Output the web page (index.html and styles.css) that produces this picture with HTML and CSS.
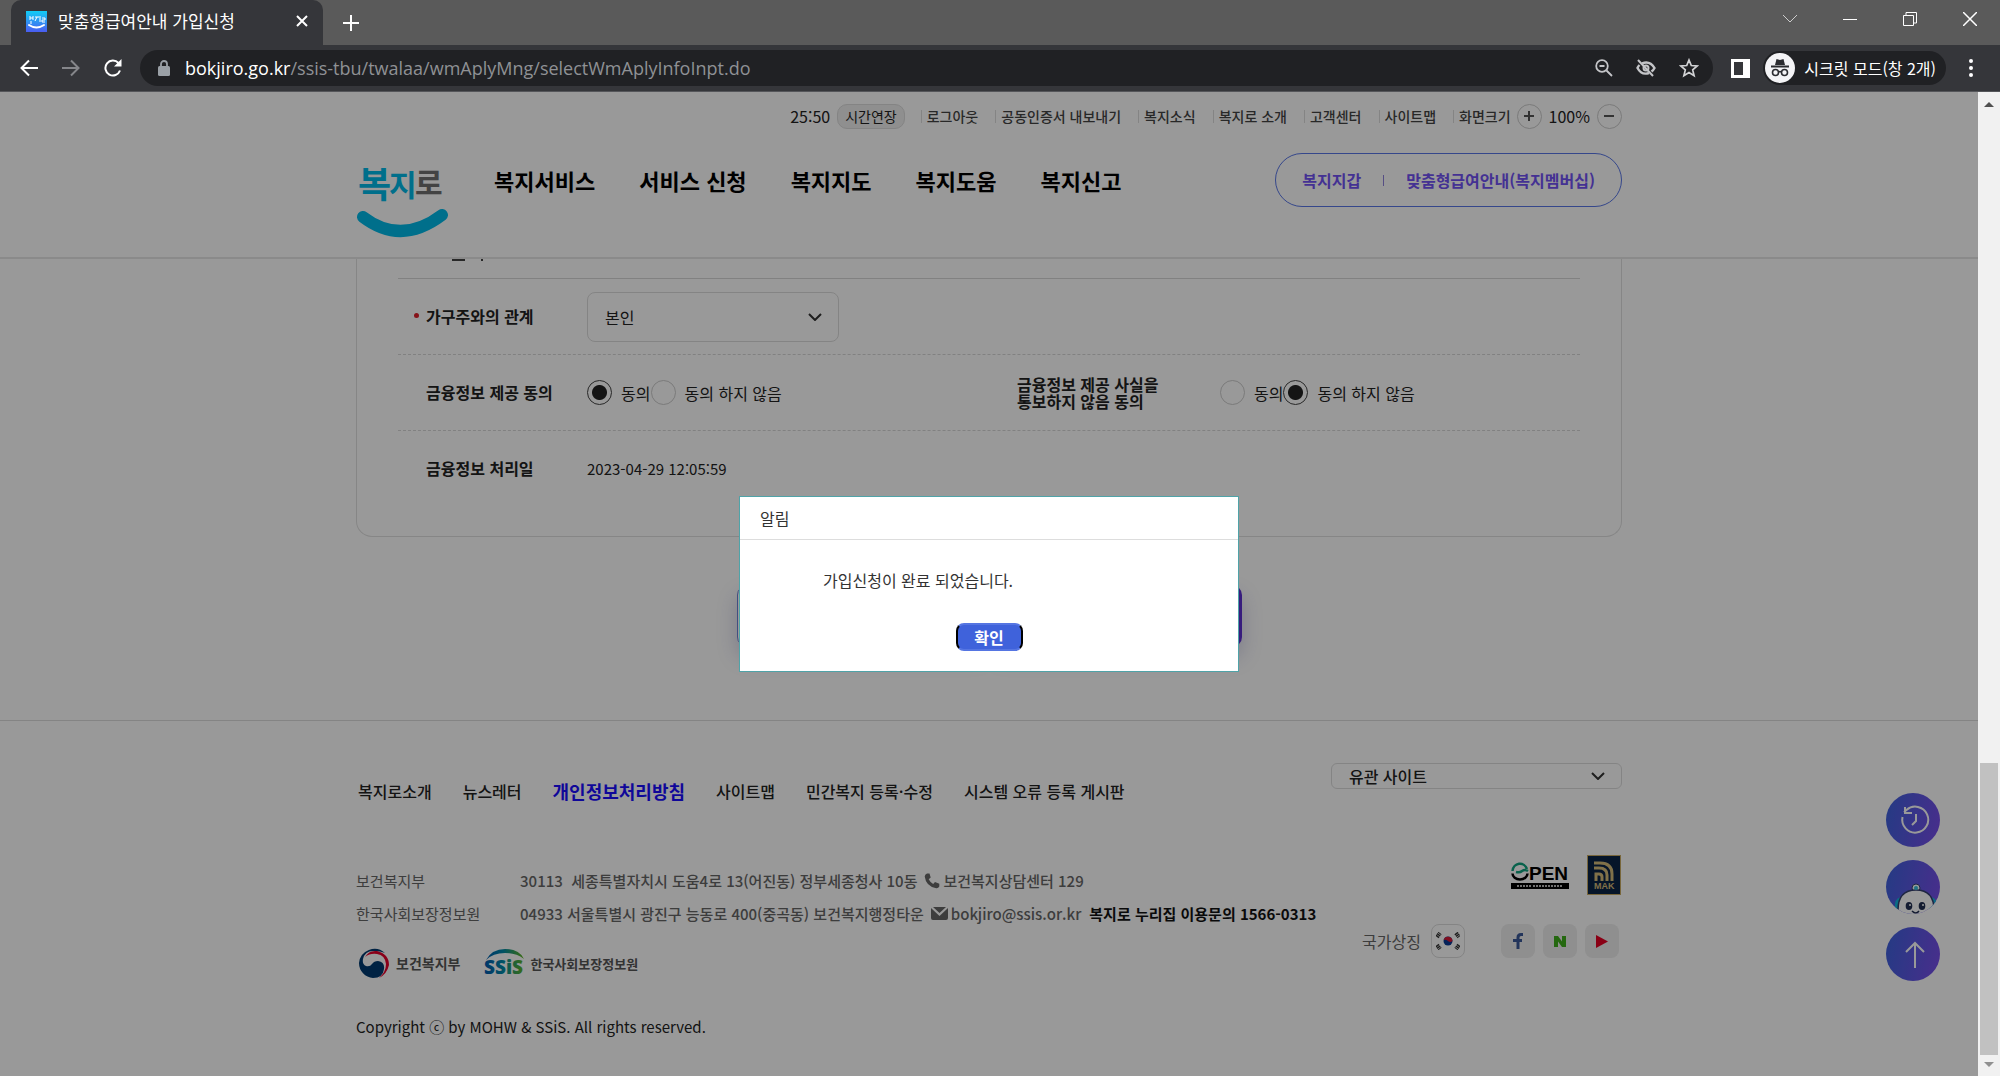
FILE: index.html
```
<!DOCTYPE html>
<html lang="ko">

<head>
	<meta charset="utf-8">
	<title>맞춤형급여안내 가입신청</title>
	<link rel="stylesheet" href="styles.css">
</head>

<body>
	<!-- browser window -->
	<div class="tab-bar">
		<div class="tab">
			<svg class="favicon" viewBox="0 0 21 21">
				<defs>
					<linearGradient id="fav" x1="0" y1="0" x2="0" y2="1">
						<stop offset="0" stop-color="#12cdf5" />
						<stop offset="1" stop-color="#4a5cf0" />
					</linearGradient>
				</defs>
				<rect width="21" height="21" fill="url(#fav)" />
				<path d="M4 5v4M7 5v4M4 7h3M5 10v3M9 6h4M11 6l-2 4M14 5v6M16 7h3v2h-3v2h3" stroke="#fff" stroke-width="1" fill="none" />
				<path d="M3 14q7.5 5 15 0" stroke="#fff" stroke-width="2" fill="none" stroke-linecap="round" />
			</svg>
			<span class="tab-title">맞춤형급여안내 가입신청</span>
			<button class="icon-btn" aria-label="탭 닫기">
				<svg width="12" height="12" viewBox="0 0 12 12" stroke="#fff" stroke-width="2"><path d="M1 1l10 10M11 1L1 11" /></svg>
			</button>
		</div>
		<button class="icon-btn new-tab" aria-label="새 탭">
			<svg width="16" height="16" viewBox="0 0 16 16" stroke="#fff" stroke-width="2"><path d="M8 0v16M0 8h16" /></svg>
		</button>
		<div class="window-buttons">
			<button class="icon-btn" aria-label="탭 검색"><svg width="14" height="14" viewBox="0 0 14 14" fill="none" stroke="#ccc"><path d="M0 3l7 7 7-7" /></svg></button>
			<button class="icon-btn" aria-label="최소화"><svg width="14" height="14" viewBox="0 0 14 14" fill="none" stroke="#fff"><path d="M0 7.5h14" /></svg></button>
			<button class="icon-btn" aria-label="이전 크기로"><svg width="14" height="14" viewBox="0 0 14 14" fill="none" stroke="#fff"><path d="M.5 3.5h10v10h-10zM3 3V.5h10.500V11H11" /></svg></button>
			<button class="icon-btn" aria-label="닫기"><svg width="14" height="14" viewBox="0 0 14 14" fill="none" stroke="#fff" stroke-width="1.5"><path d="M0 0l14 14M14 0L0 14" /></svg></button>
		</div>
	</div>

	<div class="toolbar">
		<div class="nav-buttons">
			<button class="icon-btn" aria-label="뒤로"><svg width="18" height="18" viewBox="0 0 18 18" fill="none" stroke="#fff" stroke-width="2"><path d="M18 9H2M9 1.5L1.5 9 9 16.5" /></svg></button>
			<button class="icon-btn" aria-label="앞으로"><svg width="18" height="18" viewBox="0 0 18 18" fill="none" stroke="#85868a" stroke-width="2"><path d="M0 9h16M9 1.5L16.5 9 9 16.5" /></svg></button>
			<button class="icon-btn" aria-label="새로고침"><svg width="18" height="18" viewBox="0 0 18 18"><path d="M16 11.5A7.5 7.5 0 1 1 14.5 4" fill="none" stroke="#fff" stroke-width="2" /><path d="M17.5 0v7.5H10z" fill="#fff" /></svg></button>
		</div>
		<div class="omnibox">
			<svg width="12" height="16" viewBox="0 0 12 16"><rect y="6" width="12" height="10" rx="1.5" fill="#9aa0a6" /><path d="M3 7V4a3 3 0 0 1 6 0v3" fill="none" stroke="#9aa0a6" stroke-width="1.8" /></svg>
			<div class="url"><b>bokjiro.go.kr</b>/ssis-tbu/twalaa/wmAplyMng/selectWmAplyInfoInpt.do</div>
			<button class="icon-btn" aria-label="확대/축소"><svg width="18" height="18" viewBox="0 0 18 18" fill="none" stroke="#c4c5c8" stroke-width="1.8"><circle cx="7" cy="7" r="5.8" /><path d="M11.5 11.5l5.5 5.5M4.5 7h5" /></svg></button>
			<button class="icon-btn" aria-label="서드 파티 쿠키 차단됨"><svg width="20" height="18" viewBox="0 0 20 18" fill="none" stroke="#c4c5c8" stroke-width="2"><path d="M6 4.3q8-3 12.5 4.7-1 2-3 3.5M3.5 6Q2 7.5 1.5 9q4 7.5 11.5 5" stroke-width="2.4" /><circle cx="10" cy="9" r="2.5" /><path d="M2 1l15 16" /></svg></button>
			<button class="icon-btn" aria-label="북마크"><svg width="20" height="20" viewBox="0 0 20 20" fill="none" stroke="#d2d3d5" stroke-width="1.7"><path d="M10 2l2.3 5.5 5.9.5-4.5 3.9 1.4 5.8L10 14.600l-5.1 3.1 1.4-5.8L1.8 8l5.9-.5z" /></svg></button>
		</div>
		<button class="icon-btn panel-btn" aria-label="측면 패널"><svg width="19" height="19" viewBox="0 0 19 19"><path fill="#fff" fill-rule="evenodd" d="M0 0h19v19H0zM3 3v13h9V3z" /></svg></button>
		<button class="profile">
			<svg width="30" height="30" viewBox="0 0 30 30">
				<circle cx="15" cy="15" r="15" fill="#f4f4f6" />
				<path d="M10 12l1.5-6 3.5 1 3.5-1 1.5 6zM6 12.5h18v2H6z" fill="#2b2c30" />
				<g fill="none" stroke="#2b2c30" stroke-width="1.6"><circle cx="10.5" cy="19.5" r="3" /><circle cx="19.5" cy="19.5" r="3" /><path d="M13.5 19q1.5-1 3 0" /></g>
			</svg>
			<span>시크릿 모드(창 2개)</span>
		</button>
		<button class="icon-btn" aria-label="메뉴"><svg width="4" height="18" viewBox="0 0 4 18" fill="#fff"><circle cx="2" cy="2" r="2" /><circle cx="2" cy="9" r="2" /><circle cx="2" cy="16" r="2" /></svg></button>
	</div>

	<div class="view">
		<div class="page">
			<header class="site-header">
				<div class="inner">
					<div class="util">
						<span class="timer">25:50</span>
						<button class="extend">시간연장</button>
						<ul class="util-menu">
							<li><a href="#">로그아웃</a></li>
							<li><a href="#">공동인증서 내보내기</a></li>
							<li><a href="#">복지소식</a></li>
							<li><a href="#">복지로 소개</a></li>
							<li><a href="#">고객센터</a></li>
							<li><a href="#">사이트맵</a></li>
							<li>화면크기</li>
						</ul>
						<button class="zoom-btn" aria-label="확대"><svg width="10" height="10" viewBox="0 0 10 10" stroke="#555" stroke-width="2"><path d="M5 0v10M0 5h10" /></svg></button>
						<span class="percent">100%</span>
						<button class="zoom-btn" aria-label="축소"><svg width="10" height="10" viewBox="0 0 10 10" stroke="#555" stroke-width="2"><path d="M0 5h10" /></svg></button>
					</div>
					<div class="gnb">
						<a href="#" aria-label="복지로">
							<svg class="logo" viewBox="0 0 93 86">
								<text x="2" y="45" font-size="36" fill="#00b9e8">복</text>
								<text x="33" y="43" font-size="30" fill="#00b9e8">지</text>
								<text x="59" y="41" font-size="30" fill="#707070">로</text>
								<path d="M7 64Q45 93 86 62" fill="none" stroke="#00b9e8" stroke-width="12" stroke-linecap="round" />
							</svg>
						</a>
						<nav class="menu">
							<a href="#">복지서비스</a>
							<a href="#">서비스 신청</a>
							<a href="#">복지지도</a>
							<a href="#">복지도움</a>
							<a href="#">복지신고</a>
						</nav>
						<div class="pill">
							<a href="#">복지지갑</a>
							<a href="#">맞춤형급여안내(복지멤버십)</a>
						</div>
					</div>
				</div>
			</header>

			<main class="inner">
				<form class="card">
					<div class="cut-row"><i></i><i></i></div>
					<div class="row">
						<div class="cell">
							<label class="label required" for="relation">가구주와의 관계</label>
							<select id="relation" class="select relation">
								<option>본인</option>
							</select>
						</div>
					</div>
					<div class="row">
						<div class="cell" role="group" aria-labelledby="agree-label">
							<span class="label" id="agree-label">금융정보 제공 동의</span>
							<label class="radio"><input type="radio" name="agree" checked>동의</label>
							<label class="radio"><input type="radio" name="agree">동의 하지 않음</label>
						</div>
						<div class="cell" role="group" aria-labelledby="notice-label">
							<span class="label wide" id="notice-label">금융정보 제공 사실을<br>통보하지 않음 동의</span>
							<label class="radio"><input type="radio" name="notice">동의</label>
							<label class="radio"><input type="radio" name="notice" checked>동의 하지 않음</label>
						</div>
					</div>
					<div class="row">
						<div class="cell">
							<span class="label">금융정보 처리일</span>
							<span class="date">2023-04-29 12:05:59</span>
						</div>
					</div>
				</form>
				<div class="form-buttons">
					<button class="btn-line" aria-label="이전"></button>
					<button class="btn-fill" aria-label="신청"></button>
				</div>
			</main>

			<footer class="site-footer">
				<div class="inner footer-cols">
					<div class="footer-left">
						<nav class="footer-menu">
							<a href="#">복지로소개</a>
							<a href="#">뉴스레터</a>
							<a href="#" class="privacy">개인정보처리방침</a>
							<a href="#">사이트맵</a>
							<a href="#">민간복지 등록·수정</a>
							<a href="#">시스템 오류 등록 게시판</a>
						</nav>
						<dl class="address">
							<dt>보건복지부</dt>
							<dd>
								<span>30113&nbsp; 세종특별자치시 도움4로 13(어진동) 정부세종청사 10동</span>
								<svg width="16" height="16" viewBox="0 0 16 16"><path d="M3 .5l2.5 0 1.2 4-2 1.7q1.5 3.2 4.5 4.7L11 9l4.3 1.7v2.8q-1 2-3 1.8Q2 13.5.7 3.5.8 1.5 3 .5z" fill="#666" /></svg>
								<span>보건복지상담센터 129</span>
							</dd>
							<dt>한국사회보장정보원</dt>
							<dd>
								<span>04933 서울특별시 광진구 능동로 400(중곡동) 보건복지행정타운</span>
								<svg width="17" height="13" viewBox="0 0 17 13"><path d="M2 0h13L8.5 6zM0 1l8.5 8L17 1v10q0 2-2 2H2q-2 0-2-2z" fill="#666" /></svg>
								<a href="#">bokjiro@ssis.or.kr</a>
								<strong>복지로 누리집 이용문의 1566-0313</strong>
							</dd>
						</dl>
						<div class="orgs">
							<a href="#" class="mohw">
								<svg width="32" height="32" viewBox="0 0 32 32">
									<path d="M27 6A15.5 15.5 0 0 0 1 16 15 15 0 0 0 15 31q10 0 11-9 1-7-6-8-4 0-6 3-2 3-6 2-4-2-3-7 2-8 10-8 8 0 12 2z" fill="#003a70" />
									<path d="M7 10Q11 3 19 4 31 7 31 18 29 27 21 31 28 25 28 17 27 8 19 7 12 6 7 10z" fill="#e5002b" />
								</svg>
								<span>보건복지부</span>
							</a>
							<a href="#" class="ssis">
								<svg width="42" height="28" viewBox="0 0 42 28">
									<defs>
										<linearGradient id="ss" gradientUnits="userSpaceOnUse" x1="0" y1="0" x2="42" y2="0">
											<stop offset="0" stop-color="#0058b0" />
											<stop offset=".45" stop-color="#0088a8" />
											<stop offset="1" stop-color="#6dbb10" />
										</linearGradient>
									</defs>
									<path d="M2 11Q8 0 21 0q14 0 19 10Q32 4 21 4 9 4 2 11z" fill="url(#ss)" />
									<text x="0" y="25" fill="url(#ss)">SSiS</text>
								</svg>
								<span>한국사회보장정보원</span>
							</a>
						</div>
						<p class="copyright">Copyright ⓒ by MOHW &amp; SSiS. All rights reserved.</p>
					</div>
					<div class="footer-right">
						<select class="select related" aria-label="유관 사이트">
							<option>유관 사이트</option>
						</select>
						<div class="marks">
							<svg width="58" height="27" viewBox="0 0 58 27">
								<path d="M1.500 9A7.500 8 0 0 1 16 7M5 10q4 1 6-1 3-2 6 0" fill="none" stroke="#10a37f" stroke-width="2.500" />
								<path d="M1.500 11.500a7.500 6 0 0 0 15 0" fill="none" stroke="#000" stroke-width="2.500" />
								<text x="18" y="18" class="open-text">PEN</text>
								<rect y="21" width="58" height="6" fill="#000" />
								<path d="M6 24h14M22 24h30" stroke="#bbb" stroke-width="2" stroke-dasharray="2 1" />
							</svg>
							<svg width="34" height="40" viewBox="0 0 34 40">
								<rect x=".5" y=".5" width="33" height="39" fill="#0b2345" stroke="#c9ab63" />
								<path d="M7 8h6q12 0 12 11v7M7 13h5q8 0 8 7v6M9 26v-7h3q3 0 3 3v4" fill="none" stroke="#d6bd7b" stroke-width="3" />
								<text x="7" y="34" class="mak-text">MAK</text>
							</svg>
						</div>
						<div class="sns">
							<span>국가상징</span>
							<a href="#" class="flag" aria-label="태극기">
								<svg width="24" height="18" viewBox="0 0 24 18">
									<circle cx="12" cy="9" r="4.5" fill="#0b3a94" />
									<path d="M7.700 8A4.500 4.500 0 0 1 16.500 9Q14 11 12 9T7.700 8z" fill="#d91a36" />
									<path d="M1 5l3-4M20 1l3 4M1 13l3 4M23 13l-3 4" stroke="#333" stroke-width="4" stroke-dasharray="1.5 .5" />
								</svg>
							</a>
							<a href="#" aria-label="페이스북"><svg width="16" height="18" viewBox="0 0 16 18" fill="none" stroke="#3b5998" stroke-width="3"><path d="M13 2.5h-2q-3 0-3 3V17M3 8.5h9" /></svg></a>
							<a href="#" aria-label="네이버 블로그"><svg width="12" height="11" viewBox="0 0 12 11"><path d="M0 0h4l4 5.500V0h4v11H8L4 5.500V11H0z" fill="#3fae1c" /></svg></a>
							<a href="#" aria-label="유튜브"><svg width="12" height="13" viewBox="0 0 12 13"><path d="M0 0l12 6.500L0 13z" fill="#e60023" /></svg></a>
						</div>
					</div>
				</div>
			</footer>

			<div class="quick">
				<button aria-label="최근 이용 서비스">
					<svg width="54" height="54" viewBox="0 0 54 54" fill="none" stroke="#fff" stroke-width="2"><path d="M16.500 24a13 13 0 1 0 4-7L18 19M19 14v6h7M30 21v7l-4 4" /></svg>
				</button>
				<button aria-label="챗봇">
					<svg width="54" height="54" viewBox="0 0 54 54">
						<path d="M15 37q-7 1-6 12h42q1-11-6-12z" fill="#12b4dc" />
						<circle cx="30" cy="28" r="4" fill="#fff" stroke="#34406e" />
						<path d="M12 50q0-20 18-20t18 20v8H12z" fill="#fff" stroke="#34406e" stroke-width="1.5" />
						<circle cx="30" cy="28" r="2" fill="#32bede" />
						<ellipse cx="23" cy="46" rx="3.3" ry="4" fill="#223052" />
						<ellipse cx="36" cy="46" rx="3.3" ry="4" fill="#223052" />
						<circle cx="24" cy="45" r="1" fill="#fff" />
						<circle cx="37" cy="45" r="1" fill="#fff" />
						<path d="M26 51q4 4 7 0" stroke="#223052" stroke-width="1.5" fill="none" />
					</svg>
				</button>
				<button aria-label="맨 위로">
					<svg width="54" height="54" viewBox="0 0 54 54" fill="none" stroke="#fff" stroke-width="2"><path d="M29 41V16M20 25l9-9 9 9" /></svg>
				</button>
			</div>

			<!-- alert -->
			<div class="dim">
				<div class="alert" role="alertdialog" aria-labelledby="alert-title">
					<div class="alert-title" id="alert-title">알림</div>
					<p>가입신청이 완료 되었습니다.</p>
					<button>확인</button>
				</div>
			</div>
		</div>
		<div class="scrollbar">
			<svg width="10" height="5" viewBox="0 0 10 5" fill="#505050"><path d="M0 5l5-5 5 5z" /></svg>
			<div class="track"><div class="thumb"></div></div>
			<svg width="10" height="5" viewBox="0 0 10 5" fill="#909090"><path d="M0 0l5 5 5-5z" /></svg>
		</div>
	</div>
</body>

</html>
```

FILE: styles.css
```
* {
	box-sizing: border-box;
}

body {
	margin: 0;
	height: 100vh;
	display: flex;
	flex-direction: column;
	overflow: hidden;
	font-family: "Noto Sans CJK KR", sans-serif;
	font-size: 16px;
	color: #222;
}

a {
	color: inherit;
	text-decoration: none;
}

button {
	font-family: inherit;
	padding: 0;
	border: 0;
	cursor: pointer;
}

svg {
	display: block;
	flex: none;
}

ul,
dl,
dd,
p {
	margin: 0;
	padding: 0;
	list-style: none;
}

.icon-btn {
	background: none;
	display: flex;
}

/* browser window */
.tab-bar {
	height: 45px;
	background: #5a5a5a;
	display: flex;
	align-items: center;
	padding: 0 23px 0 11px;
}

.tab {
	width: 312px;
	height: 45px;
	background: #35363a;
	border-radius: 10px 10px 0 0;
	display: flex;
	align-items: center;
	gap: 11px;
	padding: 0 15px 3px;
	color: #fff;
}

.favicon {
	width: 21px;
	height: 21px;
}

.tab-title {
	flex: 1;
	font-size: 17px;
	line-height: 24px;
	white-space: nowrap;
}

.new-tab {
	margin-left: 20px;
}

.window-buttons {
	margin: 0 0 7px auto;
	display: flex;
	gap: 46px;
}

.toolbar {
	height: 47px;
	background: #35363a;
	border-bottom: 1px solid #55565a;
	display: flex;
	align-items: center;
	padding: 0 27px 0 20px;
}

.nav-buttons {
	display: flex;
	gap: 24px;
	margin-right: 18px;
}

.omnibox {
	flex: 1;
	height: 36px;
	border-radius: 18px;
	background: #202124;
	display: flex;
	align-items: center;
	gap: 23px;
	padding: 0 14px 0 18px;
}

.url {
	flex: 1;
	margin-left: -8px;
	font-family: "Open Sans", "Noto Sans CJK KR", sans-serif;
	font-size: 18px;
	color: #8f9195;
}

.url b {
	font-weight: 400;
	color: #fff;
}

.panel-btn {
	margin: 0 13px 0 18px;
}

.profile {
	height: 34px;
	border-radius: 17px;
	background: #202124;
	color: #fff;
	font-size: 16px;
	display: flex;
	align-items: center;
	gap: 9px;
	padding: 0 10px 0 2px;
	margin-right: 23px;
}

.view {
	flex: 1;
	min-height: 0;
	display: flex;
}

.page {
	flex: 1;
	position: relative;
	overflow: hidden;
	background: #fff;
}

.scrollbar {
	width: 22px;
	background: #f1f1f1;
	display: flex;
	flex-direction: column;
	align-items: center;
	padding: 10px 0 9px;
}

.track {
	flex: 1;
	width: 18px;
	margin: 7px 0;
	display: flex;
	flex-direction: column;
	justify-content: flex-end;
}

.thumb {
	height: 31%;
	background: #c1c1c1;
}

.inner {
	width: 64%;
	margin: 0 auto;
}

/* header */
.site-header {
	padding-top: 11px;
	border-bottom: 2px solid #e6e6e6;
}

.util {
	height: 26px;
	display: flex;
	align-items: center;
	justify-content: flex-end;
	font-size: 14px;
}

.timer,
.percent {
	font-size: 16px;
}

.extend {
	height: 25px;
	margin: 0 16px 0 7px;
	padding: 0 7px;
	border: 1px solid #dcdcdc;
	border-radius: 10px;
	background: #eee;
	color: #222;
	font-size: 14px;
	line-height: 22px;
}

.util-menu {
	display: flex;
	gap: 17px;
	margin-right: 6px;
	color: #444;
	font-weight: 500;
}

.util-menu li {
	display: flex;
	align-items: center;
	line-height: 20px;
}

.util-menu li::before {
	content: "";
	width: 1px;
	height: 13px;
	margin-right: 5px;
	background: #ddd;
}

.zoom-btn {
	width: 25px;
	height: 25px;
	border: 1px solid #ccc;
	border-radius: 50%;
	background: none;
	display: flex;
	align-items: center;
	justify-content: center;
}

.percent {
	margin: 0 7px;
}

.gnb {
	display: flex;
	align-items: flex-start;
	padding: 24px 0 18px;
}

.logo {
	width: 93px;
	height: 86px;
	font-family: "Noto Sans CJK KR", sans-serif;
	font-weight: 700;
}

.menu {
	display: flex;
	gap: 44px;
	margin-left: 45px;
	font-size: 22px;
	font-weight: 700;
	line-height: 54px;
	color: #000;
}

.pill {
	margin-left: auto;
	height: 54px;
	display: flex;
	align-items: center;
	padding: 0 26px;
	border: 1px solid #5977e8;
	border-radius: 27px;
	color: #7253f5;
	font-weight: 700;
}

.pill a + a {
	display: flex;
	align-items: center;
}

.pill a + a::before {
	content: "";
	width: 1px;
	height: 11px;
	margin: 0 22px;
	background: #8f83dd;
}

/* form */
.card {
	padding: 0 41px 30px;
	border: 1px solid #e0e0e0;
	border-top: 0;
	border-radius: 0 0 16px 16px;
}

/* tail of the section title that is scrolled under the header */
.cut-row {
	height: 19px;
	display: flex;
	gap: 16px;
	padding-left: 54px;
}

.cut-row i {
	width: 13px;
	height: 2px;
	background: #444;
}

.cut-row i + i {
	width: 2px;
}

.row {
	height: 76px;
	display: flex;
	border-top: 1px dashed #d8d8d8;
}

.cut-row + .row {
	border-top: 1px solid #d8d8d8;
}

.cell {
	width: 50%;
	display: flex;
	align-items: center;
	padding-left: 28px;
}

.label {
	width: 161px;
	position: relative;
	font-weight: 700;
	line-height: 17px;
}

.label.wide {
	width: 203px;
}

.required::before {
	content: "";
	position: absolute;
	left: -12px;
	top: 5px;
	width: 5px;
	height: 5px;
	border-radius: 50%;
	background: #e0202b;
}

.select {
	appearance: none;
	border: 1px solid #ddd;
	border-radius: 8px;
	color: #222;
	font-family: inherit;
	font-size: 16px;
	padding: 0 17px;
	background: url("data:image/svg+xml,%3Csvg xmlns='http://www.w3.org/2000/svg' width='14' height='8' fill='none' stroke='%23333' stroke-width='2'%3E%3Cpath d='M1 1l6 6 6-6'/%3E%3C/svg%3E") no-repeat right 16px center;
}

.relation {
	width: 252px;
	height: 50px;
}

.related {
	width: 291px;
	height: 26px;
	border-radius: 6px;
	font-weight: 500;
}

.radio {
	display: flex;
	align-items: center;
	line-height: 26px;
}

.radio input {
	appearance: none;
	width: 25px;
	height: 25px;
	margin: 0 9px 0 0;
	border: 1px solid #ccc;
	border-radius: 50%;
}

.radio input:checked {
	border-color: #444;
	background: radial-gradient(circle, #222 7px, transparent 8px);
}

.date {
	font-size: 15px;
}

.form-buttons {
	display: flex;
	justify-content: center;
	gap: 9px;
	margin: 48px 0 73px;
}

.form-buttons button {
	width: 248px;
	height: 62px;
	border-radius: 10px;
	box-shadow: 0 10px 20px rgba(60, 60, 150, 0.25);
}

.form-buttons .btn-line {
	background: #fff;
	border: 1px solid #6f80d8;
}

.form-buttons .btn-fill {
	background: #5c2fd0;
}

/* footer */
.site-footer {
	border-top: 1px solid #ddd;
	padding-top: 42px;
}

.footer-cols {
	display: flex;
	justify-content: space-between;
	align-items: flex-start;
}

.footer-menu {
	display: flex;
	gap: 31px;
	padding: 14px 0 0 2px;
	line-height: 28px;
	font-weight: 500;
}

.privacy {
	font-size: 18px;
	font-weight: 700;
	color: #1a0dff;
}

.address {
	display: grid;
	grid-template-columns: 164px auto;
	margin-top: 59px;
	font-size: 15px;
	line-height: 33px;
	color: #666;
	font-weight: 500;
	white-space: nowrap;
}

.address dt {
	font-weight: 400;
}

.address dd {
	display: flex;
	align-items: center;
}

.address svg {
	margin: 0 3px 0 7px;
}

.address strong {
	margin-left: 8px;
	font-weight: 700;
	color: #111;
}

.orgs {
	height: 32px;
	margin-top: 17px;
	display: flex;
	align-items: center;
	gap: 24px;
	padding-left: 2px;
	color: #555;
	font-weight: 700;
}

.orgs a {
	display: flex;
	align-items: center;
}

.mohw {
	gap: 6px;
	font-size: 14px;
}

.ssis {
	gap: 4px;
	font-size: 13px;
}

.ssis svg {
	font-family: "Open Sans", sans-serif;
	font-size: 19px;
	font-weight: 800;
}

.copyright {
	margin-top: 36px;
	font-size: 15px;
	line-height: 24px;
}

.footer-right {
	display: flex;
	flex-direction: column;
	align-items: flex-end;
}

.marks {
	display: flex;
	align-items: center;
	gap: 18px;
	margin: 66px 1px 29px 0;
}

.open-text {
	font-family: "Liberation Sans", sans-serif;
	font-size: 19px;
	font-weight: 700;
}

.mak-text {
	font-family: "Liberation Sans", sans-serif;
	font-size: 9px;
	font-weight: 700;
	fill: #d6bd7b;
}

.sns {
	display: flex;
	align-items: center;
	gap: 8px;
	margin-right: 3px;
	color: #666;
}

.sns a {
	width: 34px;
	height: 34px;
	border-radius: 8px;
	background: #eee;
	display: flex;
	align-items: center;
	justify-content: center;
}

.sns .flag {
	margin: 0 28px 0 2px;
	border: 1px solid #ddd;
	background: none;
}

/* floating buttons */
.quick {
	position: absolute;
	right: 38px;
	bottom: 95px;
	display: flex;
	flex-direction: column;
	gap: 13px;
}

.quick button {
	width: 54px;
	height: 54px;
	border-radius: 50%;
	overflow: hidden;
	background: linear-gradient(100deg, #3d62dc, #7a4dea);
}

/* alert */
.dim {
	position: absolute;
	inset: 0;
	display: flex;
	align-items: center;
	justify-content: center;
	background: rgba(0, 0, 0, 0.4);
}

.alert {
	width: 500px;
	border: 1px solid #4fa3a8;
	background: #fff;
	color: #333;
	text-align: center;
	padding-bottom: 20px;
}

.alert-title {
	text-align: left;
	padding: 0 20px;
	line-height: 42px;
	border-bottom: 1px solid #ddd;
}

.alert p {
	text-align: left;
	padding: 28px 83px 31px;
	line-height: 24px;
}

.alert button {
	width: 67px;
	height: 28px;
	border: 2px solid #000;
	border-top-color: #5575e2;
	border-bottom-color: #5575e2;
	border-radius: 8px;
	background: #3f62db;
	color: #fff;
	font-size: 16px;
	font-weight: 700;
	line-height: 24px;
}
```
